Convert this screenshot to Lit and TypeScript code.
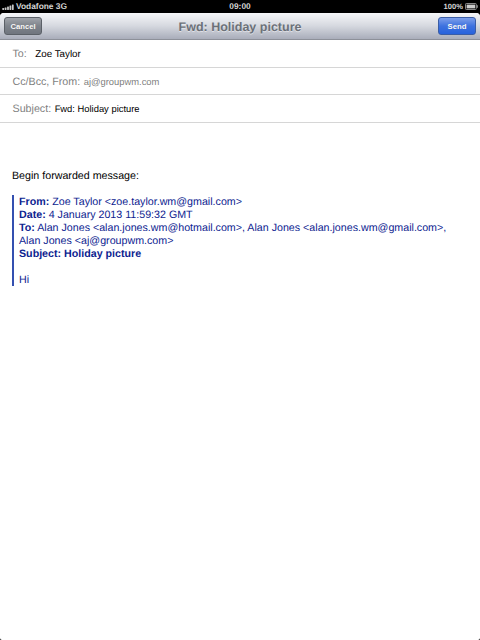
import { css, CSSResultGroup, html, LitElement, svg, TemplateResult } from "lit";
import { customElement, property } from "lit/decorators.js";

const SIGNAL_BARS = [2, 2.6, 3.4, 4.4, 5.4];

@customElement("status-bar")
export class StatusBar extends LitElement {
    @property() public carrier: string = "";

    @property() public time: string = "";

    @property() public battery: string = "";

    protected render(): TemplateResult {
        return html`
            <div class="side">
                <svg class="signal" width="13" height="6" viewBox="0 0 13 6">
                    ${SIGNAL_BARS.map(
                        (height, i) =>
                            svg`<rect x=${0.3 + i * 2.4} y=${6 - height} width="1.8" height=${height} rx="0.4" />`
                    )}
                </svg>
                <span class="carrier">${this.carrier}</span>
            </div>
            <span class="time">${this.time}</span>
            <div class="side end">
                <span class="battery">${this.battery}</span>
                <svg width="13" height="7" viewBox="0 0 13 7">
                    <rect x="0.5" y="0.5" width="10.8" height="6" rx="0.8" fill="none" stroke="#999" stroke-width="0.9" />
                    <rect x="1.6" y="1.6" width="8.6" height="3.8" fill="#ccc" />
                    <rect x="11.6" y="2.2" width="1.2" height="2.6" fill="#999" />
                </svg>
            </div>
        `;
    }

    static get styles(): CSSResultGroup {
        return css`
            :host {
                display: grid;
                grid-template-columns: 1fr auto 1fr;
                align-items: center;
                box-sizing: border-box;
                height: 12.5px;
                padding: 1px 2px 0;
                color: #d4d4d4;
                font-size: 8.4px;
                font-weight: bold;
                line-height: 11px;
                white-space: nowrap;
            }
            .side {
                display: flex;
                align-items: center;
                gap: 1px;
            }
            .end {
                justify-content: flex-end;
                gap: 2px;
            }
            .signal {
                fill: #c8c8c8;
            }
            .battery {
                font-size: 7.6px;
            }
            svg {
                flex: none;
            }
        `;
    }
}

@customElement("nav-bar")
export class NavBar extends LitElement {
    @property() public heading: string = "";

    protected render(): TemplateResult {
        return html`
            <button class="cancel">Cancel</button>
            <h1>${this.heading}</h1>
            <button class="send">Send</button>
        `;
    }

    static get styles(): CSSResultGroup {
        return css`
            :host {
                display: grid;
                grid-template-columns: 1fr auto 1fr;
                align-items: center;
                box-sizing: border-box;
                height: 27.5px;
                padding: 0 4px;
                border-bottom: 1px solid #8d9099;
                border-radius: 4px 4px 0 0;
                background: linear-gradient(#f6f7f9, #d5d8df 50%, #a9adba);
            }
            h1 {
                margin: 0;
                padding-top: 2px;
                color: #6b7078;
                font-size: 12.5px;
                line-height: 16px;
                text-shadow: 0 0.5px 0 rgba(255, 255, 255, 0.5);
                white-space: nowrap;
            }
            button {
                box-sizing: border-box;
                height: 18.5px;
                padding: 1px 0 0;
                border: 1px solid;
                border-radius: 3px;
                color: #fff;
                font: bold 7.7px/15px "Liberation Sans", Arial, sans-serif;
                text-align: center;
            }
            .cancel {
                width: 38px;
                border-color: #5b6067;
                background: linear-gradient(#a0a4aa, #7e838b 50%, #70757e);
                text-shadow: 0 -0.5px 0 rgba(0, 0, 0, 0.4);
            }
            .send {
                justify-self: end;
                width: 38px;
                border-color: #3a5da6;
                background: linear-gradient(#7d9fea, #3e72df 50%, #2762dc);
                text-shadow: 0 -0.5px 0 rgba(0, 0, 0, 0.3);
            }
        `;
    }
}

@customElement("header-field")
export class HeaderField extends LitElement {
    @property() public label: string = "";

    @property() public value: string = "";

    protected render(): TemplateResult {
        return html`
            <span class="label">${this.label}</span>
            <span class="value">${this.value}</span>
        `;
    }

    static get styles(): CSSResultGroup {
        return css`
            :host {
                display: flex;
                align-items: baseline;
                gap: var(--field-gap, 3.5px);
                box-sizing: border-box;
                height: 27.5px;
                padding: 0 12.5px;
                border-bottom: 1px solid #d6d6d6;
                line-height: var(--field-line, 27px);
                white-space: nowrap;
            }
            .label {
                color: #7f7f7f;
                font-size: 10.7px;
            }
            .value {
                color: var(--value-color, #000);
                font-size: var(--value-size, 9.4px);
            }
        `;
    }
}

@customElement("app-root")
export class AppRoot extends LitElement {
    protected render(): TemplateResult {
        return html`
            <status-bar carrier="Vodafone 3G" time="09:00" battery="100%"></status-bar>
            <main>
                <nav-bar heading="Fwd: Holiday picture"></nav-bar>
                <header-field class="to" label="To:" value="Zoe Taylor"></header-field>
                <header-field class="from" label="Cc/Bcc, From:" value="aj@groupwm.com"></header-field>
                <header-field label="Subject:" value="Fwd: Holiday picture"></header-field>
                <section class="body">
                    <p>Begin forwarded message:</p>
                    <blockquote>
                        <div><b>From:</b> Zoe Taylor &lt;zoe.taylor.wm@gmail.com&gt;</div>
                        <div><b>Date:</b> 4 January 2013 11:59:32 GMT</div>
                        <div>
                            <b>To:</b> Alan Jones &lt;alan.jones.wm@hotmail.com&gt;, Alan Jones
                            &lt;alan.jones.wm@gmail.com&gt;,<br />Alan Jones &lt;aj@groupwm.com&gt;
                        </div>
                        <div><b>Subject: Holiday picture</b></div>
                        <div class="reply">Hi</div>
                    </blockquote>
                </section>
            </main>
        `;
    }

    static get styles(): CSSResultGroup {
        return css`
            :host {
                display: flex;
                flex-direction: column;
                height: 100vh;
                overflow: hidden;
                background: #000;
                font-family: "Liberation Sans", Arial, sans-serif;
                text-rendering: geometricPrecision;
            }
            main {
                flex: 1;
                border-radius: 4px 4px 2px 2px;
                background: #fff;
            }
            .to {
                --field-gap: 8.5px;
                --field-line: 28px;
                --value-size: 9.8px;
            }
            .from {
                --value-color: #7f7f7f;
            }
            .body {
                padding: 47px 12px 0;
                font-size: 10.68px;
                line-height: 13px;
            }
            p {
                margin: 0 0 12px;
            }
            blockquote {
                box-sizing: border-box;
                height: 91px;
                margin: 0;
                padding: 1px 0 0 5px;
                border-left: 2px solid #3450b0;
                color: #0d2390;
                white-space: nowrap;
            }
            .reply {
                margin-top: 13px;
            }
        `;
    }
}
